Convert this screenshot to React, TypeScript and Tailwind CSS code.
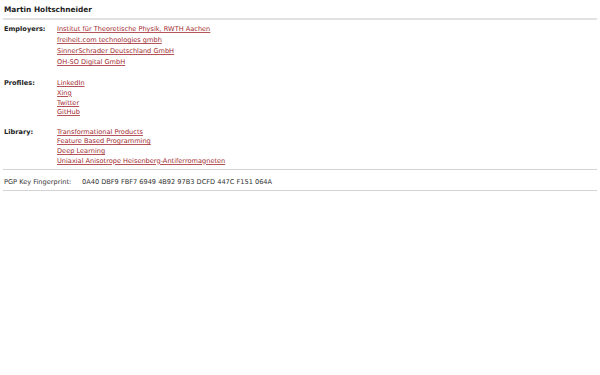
import React from 'react';

const employers = [
  'Institut für Theoretische Physik, RWTH Aachen',
  'freiheit.com technologies gmbh',
  'SinnerSchrader Deutschland GmbH',
  'OH-SO Digital GmbH',
];

const profiles = ['LinkedIn', 'Xing', 'Twitter', 'GitHub'];

const library = [
  'Transformational Products',
  'Feature Based Programming',
  'Deep Learning',
  'Uniaxial Anisotrope Heisenberg-Antiferromagneten',
];

const Section = (props: { label: string; items: string[]; className?: string; rowClass: string }) => (
  <div className={`flex ${props.className ?? ''}`}>
    <div className={`w-[53px] shrink-0 font-bold text-[#222] ${props.rowClass}`}>{props.label}</div>
    <ul className="m-0 p-0 list-none">
      {props.items.map((item) => (
        <li key={item} className={props.rowClass}>
          <a href="#" className="text-[#a32a30] underline decoration-[#b4545a] underline-offset-1">
            {item}
          </a>
        </li>
      ))}
    </ul>
  </div>
);

export default function App() {
  return (
    <div className="w-[600px] h-[375px] bg-white font-['DejaVu_Sans',sans-serif] text-[6.6px] text-[#222] px-[4px]">
      <h1 className="pt-[5px] h-[14px] leading-[10px] text-[7.4px] font-bold text-[#222]">Martin Holtschneider</h1>
      <div className="mt-[4px] -mx-[1px] h-[2px] bg-[#e2e2e2]" />

      <Section label="Employers:" items={employers} className="mt-[4px]" rowClass="leading-[11px] h-[11px]" />
      <Section label="Profiles:" items={profiles} className="mt-[11.15px]" rowClass="leading-[9.7px] h-[9.7px]" />
      <Section label="Library:" items={library} className="mt-[9.7px]" rowClass="leading-[9.7px] h-[9.7px]" />

      <div className="mt-[2.5px] -mx-[1px] h-px bg-[#d4d4d4]" />
      <div className="flex pt-[8.5px] pb-[1.8px] leading-[9.7px] text-[#333]">
        <span className="w-[78px] shrink-0">PGP Key Fingerprint:</span>
        <span>0A40 DBF9 FBF7 6949 4B92 97B3 DCFD 447C F151 064A</span>
      </div>
      <div className="-mx-[1px] h-px bg-[#d4d4d4]" />
    </div>
  );
}
